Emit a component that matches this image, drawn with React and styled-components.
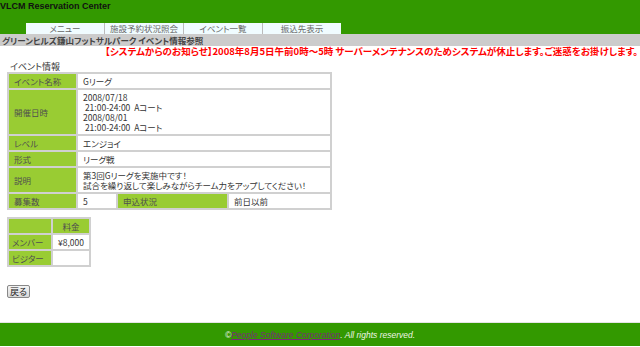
import React from 'react'
import styled, { createGlobalStyle } from 'styled-components'

const GlobalStyle = createGlobalStyle`
  body {
    margin: 0;
    background: #fff;
    font-family: "Noto Sans CJK JP", "Liberation Sans", sans-serif;
    font-feature-settings: "palt";
    font-size: 9px;
    color: #333;
  }
`;

const Header = styled.div`
  background: #339900;
  height: 34px;
  display: flex;
  flex-direction: column;
  justify-content: space-between;
`;

const SiteTitle = styled.div`
  font-family: "Liberation Sans", Arial, sans-serif;
  font-weight: bold;
  font-size: 9px;
  color: #111;
  padding-top: 1px;
  line-height: 11px;
`;

const Nav = styled.ul`
  list-style: none;
  margin: 0 0 0 26px;
  padding: 0;
  display: flex;
`;

const Tab = styled.li`
  width: 78px;
  height: 11px;
  line-height: 11px;
  background: #f0fcff;
  border-left: 1px solid #bbb;
  text-align: center;
  color: #666;
  font-size: 8.5px;
  &:first-child {
    border-left: none;
  }
`;

const PageBar = styled.div`
  background: #cccccc;
  height: 12px;
  line-height: 12px;
  padding-left: 2px;
  font-weight: bold;
  font-size: 8.5px;
  color: #444;
`;

const Notice = styled.div`
  text-align: right;
  color: #ff0000;
  font-weight: bold;
  font-size: 9.5px;
  line-height: 11px;
  padding-right: 2px;
  white-space: nowrap;
`;

const Main = styled.div`
  padding: 5px 7px 0;
`;

const Caption = styled.div`
  font-size: 9px;
  line-height: 10px;
  padding-left: 3px;
  color: #333;
`;

const Table = styled.table`
  border-collapse: collapse;
  border: 1px solid #c8c8c8;
  width: ${(p) => p.width}px;
  margin-bottom: ${(p) => p.gap || 0}px;
`;

const Label = styled.th`
  background: #99cc33;
  color: #4f4f4f;
  font-weight: normal;
  text-align: ${(p) => (p.center ? 'center' : 'left')};
  border: 2px solid #d0d0d0;
  padding: 2px ${(p) => (p.narrow ? 3 : 5)}px;
  line-height: 10px;
  font-size: 8.5px;
  white-space: nowrap;
  width: ${(p) => p.w}px;
  box-sizing: border-box;
`;

const Cell = styled.td`
  background: #fff;
  border: 2px solid #d0d0d0;
  padding: 2px 5px;
  line-height: 10px;
  font-size: 8.5px;
  color: #333;
  white-space: nowrap;
  width: ${(p) => (p.w ? `${p.w}px` : 'auto')};
  box-sizing: border-box;
`;

const BackButton = styled.button`
  display: block;
  font-family: inherit;
  font-feature-settings: "palt";
  font-size: 9px;
  line-height: 10px;
  padding: 0 2px;
  height: 13px;
  color: #222;
  background: linear-gradient(#f4f4f4, #d8d8d8);
  border: 1px solid #888;
  border-radius: 2px;
`;

const Footer = styled.div`
  margin-top: 24px;
  border-top: 1px solid #e4e4e4;
  background: #339900;
  height: 23px;
  display: flex;
  align-items: center;
  justify-content: center;
  font-style: italic;
  font-family: "Liberation Sans", Arial, sans-serif;
  font-size: 8.5px;
  color: #eef4e6;
`;

const Link = styled.a`
  color: #7a2a7a;
  text-decoration: underline;
`;

export default function App() {
  return (
    <>
      <GlobalStyle />
      <Header>
        <SiteTitle>VLCM Reservation Center</SiteTitle>
        <Nav>
          <Tab>メニュー</Tab>
          <Tab>施設予約状況照会</Tab>
          <Tab>イベント一覧</Tab>
          <Tab>振込先表示</Tab>
        </Nav>
      </Header>
      <PageBar>グリーンヒルズ鎌山フットサルパーク イベント情報参照</PageBar>
      <Notice>【システムからのお知らせ】2008年8月5日午前0時～5時 サーバーメンテナンスのためシステムが休止します。ご迷惑をお掛けします。</Notice>
      <Main>
        <Caption>イベント情報</Caption>
        <Table width={325} gap={7}>
          <tbody>
            <tr>
              <Label w={69}>イベント名称</Label>
              <Cell colSpan={3}>Gリーグ</Cell>
            </tr>
            <tr>
              <Label w={69}>開催日時</Label>
              <Cell colSpan={3}>
                2008/07/18<br />
                &nbsp;21:00-24:00&nbsp;&nbsp;Aコート<br />
                2008/08/01<br />
                &nbsp;21:00-24:00&nbsp;&nbsp;Aコート
              </Cell>
            </tr>
            <tr>
              <Label w={69}>レベル</Label>
              <Cell colSpan={3}>エンジョイ</Cell>
            </tr>
            <tr>
              <Label w={69}>形式</Label>
              <Cell colSpan={3}>リーグ戦</Cell>
            </tr>
            <tr>
              <Label w={69}>説明</Label>
              <Cell colSpan={3}>
                第3回Gリーグを実施中です！<br />
                試合を繰り返して楽しみながらチーム力をアップしてください！
              </Cell>
            </tr>
            <tr>
              <Label w={69}>募集数</Label>
              <Cell w={40}>5</Cell>
              <Label w={111}>申込状況</Label>
              <Cell>前日以前</Cell>
            </tr>
          </tbody>
        </Table>
        <Table width={84} gap={18}>
          <tbody>
            <tr>
              <Label w={45} narrow></Label>
              <Label center>料金</Label>
            </tr>
            <tr>
              <Label w={45} narrow>メンバー</Label>
              <Cell>¥8,000</Cell>
            </tr>
            <tr>
              <Label w={45} narrow>ビジター</Label>
              <Cell>&nbsp;</Cell>
            </tr>
          </tbody>
        </Table>
        <BackButton>戻る</BackButton>
      </Main>
      <Footer>
        ©<Link href="#">People Software Corporation</Link>. All rights reserved.
      </Footer>
    </>
  )
}
